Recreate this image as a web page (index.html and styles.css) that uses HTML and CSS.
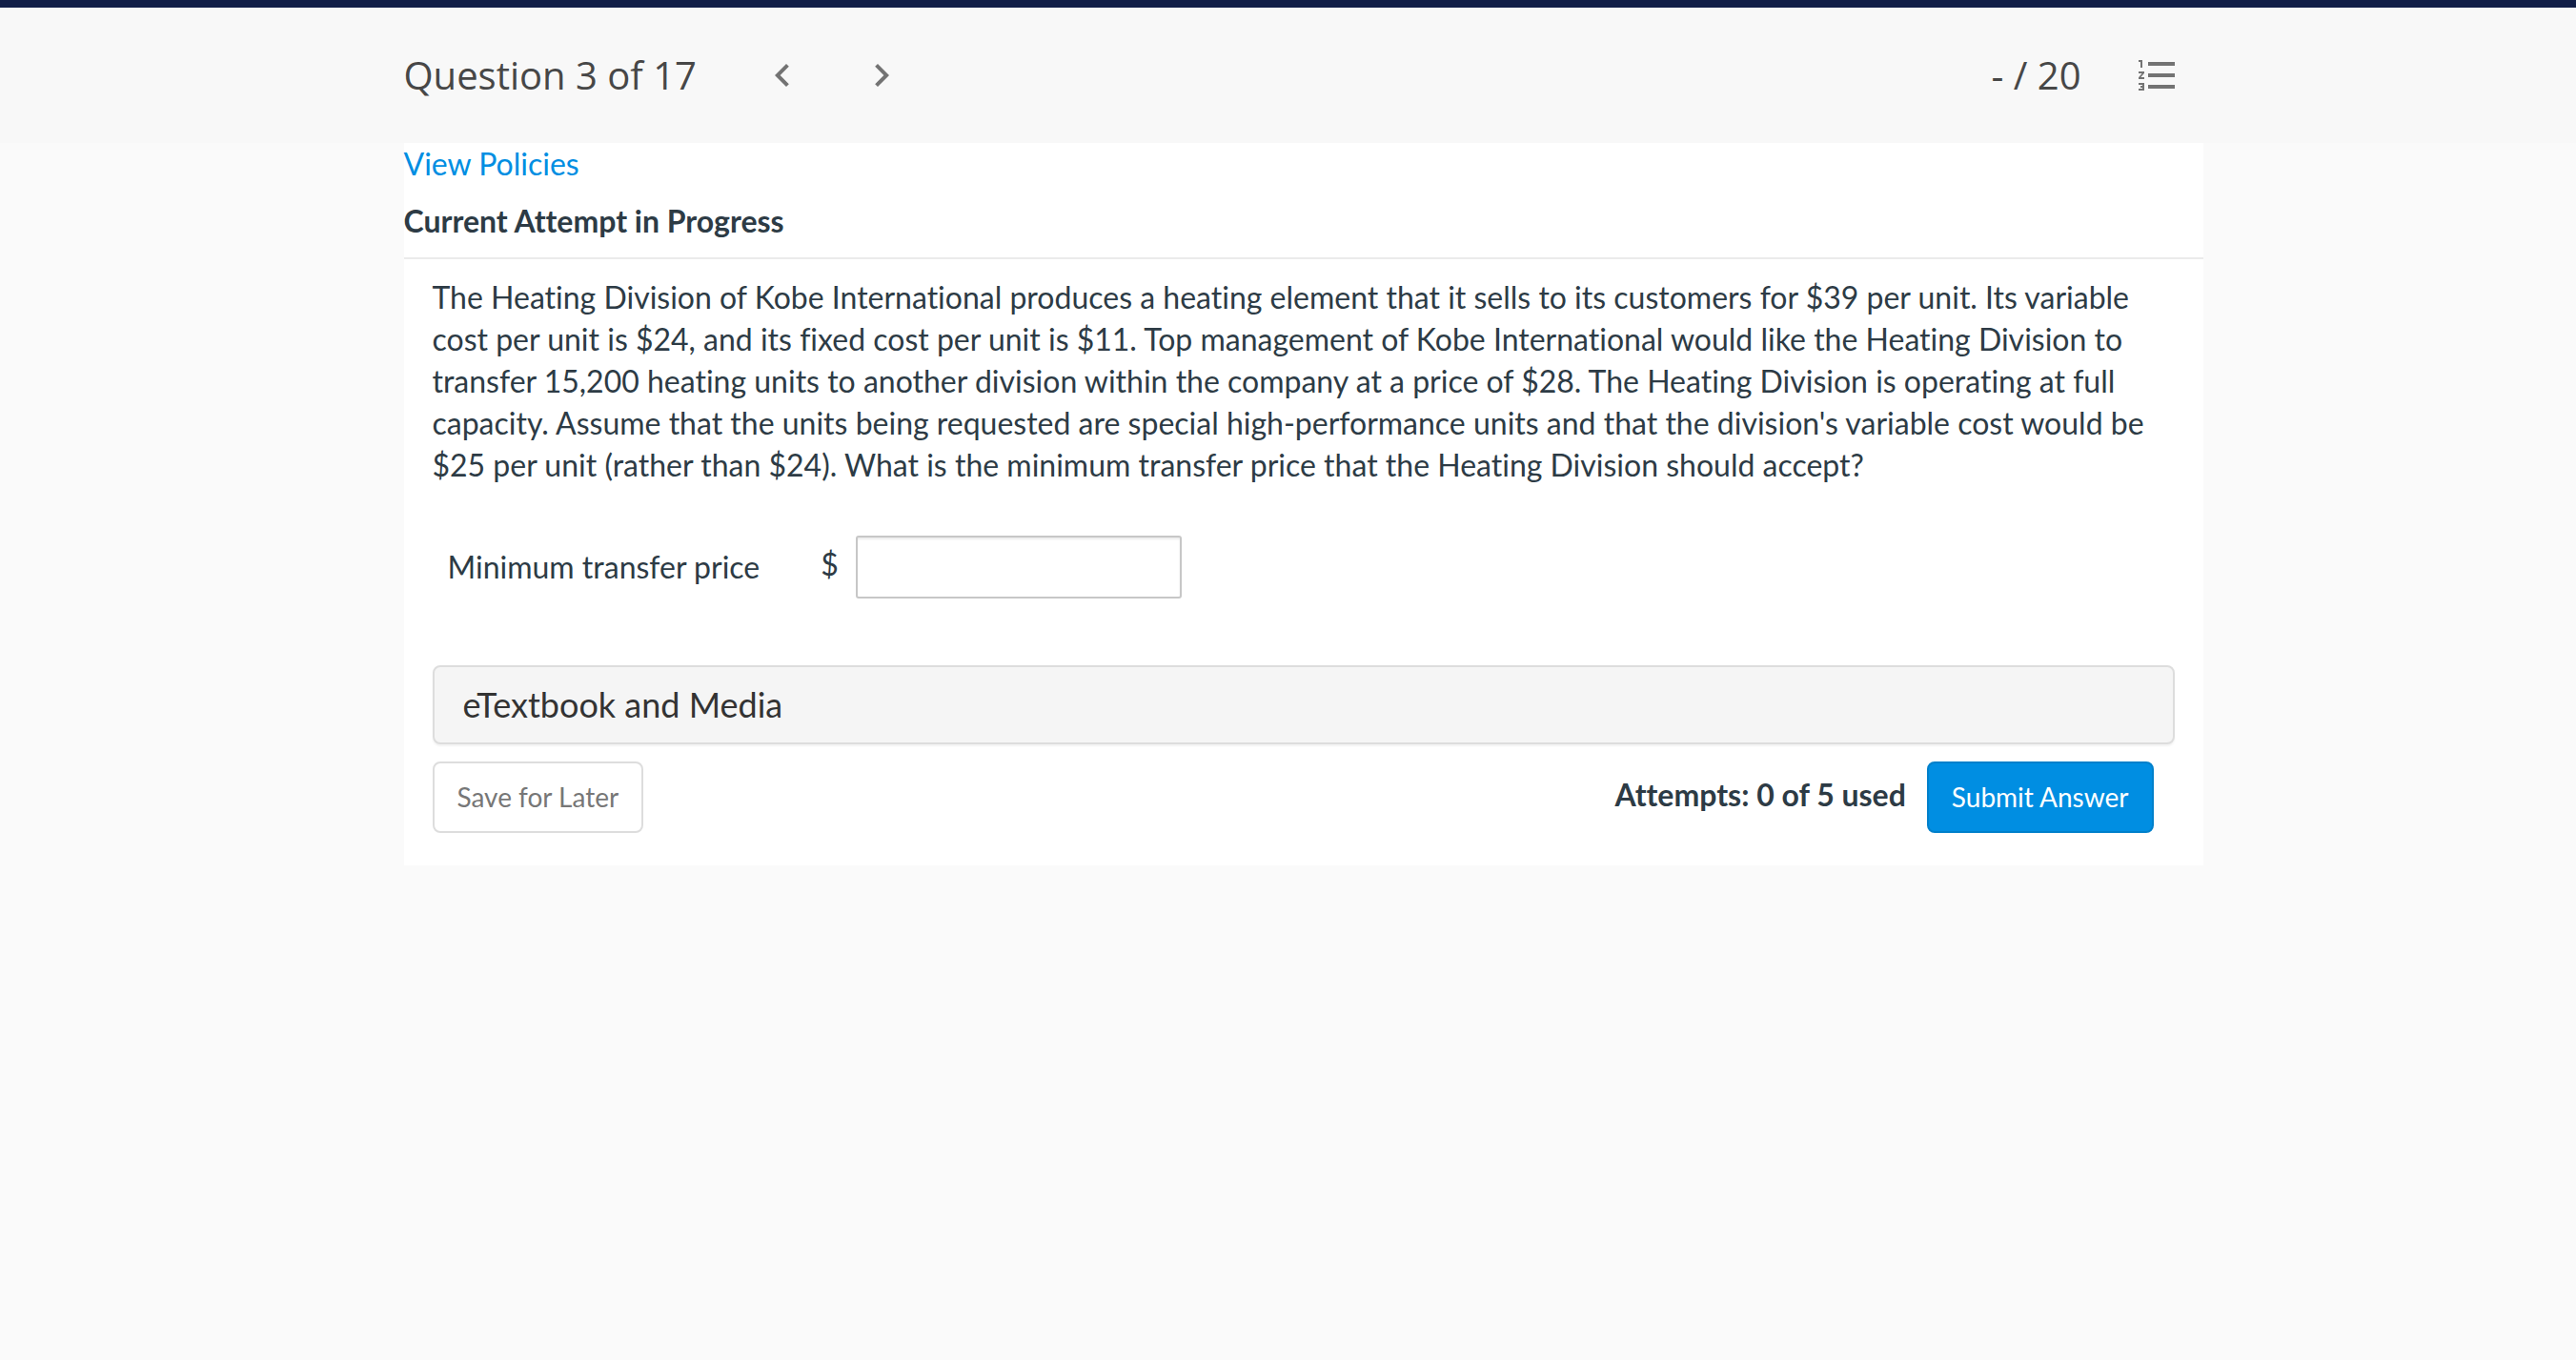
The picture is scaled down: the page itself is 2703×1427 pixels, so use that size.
FILE: index.html
```html
<!DOCTYPE html>
<html lang="en">
<head>
<meta charset="utf-8">
<title>Question 3 of 17</title>
<link rel="stylesheet" href="styles.css">
</head>
<body>
<header class="header">
  <div class="container header-row">
    <h1 class="question-title">Question 3 of 17</h1>
    <nav class="pager" aria-label="Questions">
      <button class="icon-button" type="button" aria-label="Previous question">
        <svg class="icon" viewBox="0 0 24 24"><path d="M15.41 7.41L14 6l-6 6 6 6 1.41-1.41L10.83 12z"/></svg>
      </button>
      <button class="icon-button" type="button" aria-label="Next question">
        <svg class="icon" viewBox="0 0 24 24"><path d="M10 6L8.59 7.41 13.17 12l-4.58 4.59L10 18l6-6z"/></svg>
      </button>
    </nav>
    <span class="score">- / 20</span>
    <button class="icon-button" type="button" aria-label="Question list">
      <svg class="icon" viewBox="0 0 24 24"><path d="M2 17h2v.5H3v1h1v.5H2v1h3v-4H2v1zm1-9h1V4H2v1h1v3zm-1 3h1.8L2 13.1v.9h3v-1H3.2L5 10.9V10H2v1zm5-6v2h14V5H7zm0 14h14v-2H7v2zm0-6h14v-2H7v2z"/></svg>
    </button>
  </div>
</header>
<main class="container">
  <form class="card">
    <a class="policies" href="#">View Policies</a>
    <h2 class="attempt-title">Current Attempt in Progress</h2>
    <div class="question">
      <p class="prompt">The Heating Division of Kobe International produces a heating element that it sells to its customers for $39 per unit. Its variable cost per unit is $24, and its fixed cost per unit is $11. Top management of Kobe International would like the Heating Division to transfer 15,200 heating units to another division within the company at a price of $28. The Heating Division is operating at full capacity. Assume that the units being requested are special high-performance units and that the division's variable cost would be $25 per unit (rather than $24). What is the minimum transfer price that the Heating Division should accept?</p>
      <div class="answer">
        <label class="answer-label" for="price">Minimum transfer price</label>
        <span class="currency">$</span>
        <input class="answer-input" id="price" type="text">
      </div>
      <button class="media" type="button">eTextbook and Media</button>
      <div class="actions">
        <button class="button" type="button">Save for Later</button>
        <span class="attempts">Attempts: 0 of 5 used</span>
        <button class="button button-primary" type="submit">Submit Answer</button>
      </div>
    </div>
  </form>
</main>
</body>
</html>
```
FILE: styles.css
```css
*, *::before, *::after {
  box-sizing: border-box;
}

body {
  margin: 0;
  background: #fafafa;
  color: #2d3b45;
  font-family: Lato, "Liberation Sans", sans-serif;
  font-size: 32px;
  line-height: 44px;
  font-variant-ligatures: none;
}

button {
  font-family: inherit;
  cursor: pointer;
}

.container {
  max-width: 1920px;
  margin: 0 auto;
  padding-left: 32px;
}

.header {
  border-top: 8px solid #121f48;
  background: #f8f8f8;
  color: #474747;
  font-family: "Open Sans", "Liberation Sans", sans-serif;
  font-size: 40px;
}

.header-row {
  display: flex;
  align-items: center;
  min-height: 142px;
  padding-right: 24px;
}

.question-title {
  margin: 0;
  font-size: 40px;
  font-weight: 400;
}

.pager {
  display: flex;
  gap: 56px;
  margin-left: 66px;
}

.icon-button {
  display: flex;
  padding: 0;
  border: 0;
  background: none;
  color: #737373;
}

.icon {
  width: 48px;
  height: 48px;
  fill: currentColor;
}

.score {
  margin-left: auto;
  margin-right: 56px;
}

.card {
  background: #fff;
  padding-bottom: 34px;
}

.policies {
  display: block;
  width: fit-content;
  color: #008ee2;
  text-decoration: none;
}

.attempt-title {
  margin: 0;
  padding: 16px 0;
  border-bottom: 2px solid #ebebeb;
  font-size: 32px;
  font-weight: 700;
}

.question {
  padding: 18px 30px 0;
}

.prompt {
  margin: 0;
}

.answer {
  display: flex;
  align-items: center;
  margin: 52px 0 70px;
  padding-left: 16px;
}

.currency {
  margin: 0 18px 0 64px;
  padding-bottom: 6px;
}

.answer-input {
  width: 342px;
  height: 66px;
  padding: 8px 12px;
  border: 2px solid #c7c7c7;
  border-radius: 3px;
  background: #fff;
  box-shadow: inset 0 2px 2px rgba(0, 0, 0, 0.08);
  color: inherit;
  font: inherit;
}

.media {
  display: block;
  width: 100%;
  padding: 18px 30px;
  border: 2px solid #ddd;
  border-radius: 8px;
  background: #f5f5f5;
  box-shadow: 0 2px 2px rgba(0, 0, 0, 0.05);
  color: #333;
  font-size: 36px;
  line-height: 43px;
  text-align: left;
}

.actions {
  display: flex;
  align-items: center;
  margin-top: 18px;
  padding-right: 22px;
}

.button {
  padding: 14px 24px;
  border: 2px solid #ddd;
  border-radius: 8px;
  background: #fff;
  color: #777;
  font-size: 28px;
  line-height: 43px;
}

.button-primary {
  border-color: #0080cb;
  background: #008ee2;
  color: #fff;
}

.attempts {
  margin-left: auto;
  margin-right: 22px;
  padding-bottom: 6px;
  font-weight: 700;
}
```
